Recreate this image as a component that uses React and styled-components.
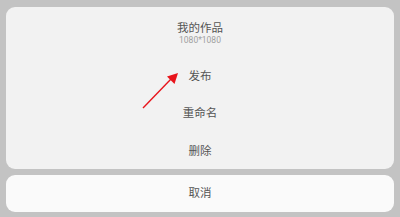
import React from 'react';
import styled, { createGlobalStyle } from 'styled-components';

const GlobalStyle = createGlobalStyle`
  html, body {
    margin: 0;
    padding: 0;
    background: #c3c3c3;
  }
  body {
    font-family: "Noto Sans CJK SC", "Noto Sans", sans-serif;
  }
`;

const Sheet = styled.div`
  width: 400px;
  height: 217px;
  box-sizing: border-box;
  padding: 7px 6px 6px;
  display: flex;
  flex-direction: column;
  gap: 6px;
  background: #c3c3c3;
  position: relative;
`;

const Card = styled.div`
  background: ${(p) => (p.light ? '#fafafa' : '#f2f2f2')};
  border-radius: 9px;
  display: flex;
  flex-direction: column;
`;

const Header = styled.div`
  height: 49px;
  display: flex;
  flex-direction: column;
  align-items: center;
  padding-top: 12px;
  box-sizing: border-box;
`;

const Title = styled.div`
  font-size: 11.5px;
  line-height: 16px;
  color: #555;
`;

const Sub = styled.div`
  font-size: 8.5px;
  line-height: 10px;
  color: #a0a0a0;
  font-family: Roboto, "Noto Sans", sans-serif;
`;

const Row = styled.div`
  height: ${(p) => p.h || 37.5}px;
  display: flex;
  align-items: center;
  justify-content: center;
  font-size: 11.5px;
  color: #555;
  padding-bottom: ${(p) => p.lift || 0}px;
  box-sizing: border-box;
`;

const Arrow = styled.svg`
  position: absolute;
  left: 140px;
  top: 68px;
`;

export default function App() {
  return (
    <>
      <GlobalStyle />
      <Sheet>
        <Card>
          <Header>
            <Title>我的作品</Title>
            <Sub>1080*1080</Sub>
          </Header>
          <Row>发布</Row>
          <Row>重命名</Row>
          <Row>删除</Row>
        </Card>
        <Card light>
          <Row h={37} lift={2}>取消</Row>
        </Card>
        <Arrow width="44" height="44" viewBox="0 0 44 44">
          <line x1="3" y1="40" x2="32" y2="10" stroke="#e8141b" strokeWidth="1.4" />
          <polygon points="38,5 27,8.5 34.5,16" fill="#e8141b" />
        </Arrow>
      </Sheet>
    </>
  );
}
